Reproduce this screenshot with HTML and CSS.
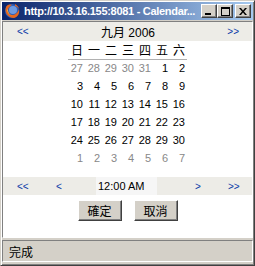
FILE: index.html
```html
<!DOCTYPE html>
<html lang="zh-Hant">
<head>
  <meta charset="UTF-8" />
  <title>Calendar</title>
  <link rel="stylesheet" href="styles.css">
</head>
<body>
  <div class="window">
    <div class="titlebar">
      <svg class="app-icon" width="16" height="16" viewBox="0 0 16 16">
        <circle cx="8" cy="8" r="7" fill="#2f5fb8"/>
        <circle cx="9" cy="7" r="4" fill="#6f9be0"/>
        <path d="M2 4 C0 9 4 15 10 15 C14 14 16 10 15 6 C14 10 11 12 8 12 C5 12 3 9 4 6 C5 4 6 3 8 2 C5 1 3 2 2 4 Z" fill="#e8661c"/>
        <path d="M3 6 C3 10 6 13 10 13 C7 13 4 10 4 7 Z" fill="#f7b13a"/>
        <path d="M11 1 C13 2 15 4 15 6 C14 4 12 3 11 3 Z" fill="#e8661c"/>
      </svg>
      <span class="title-text">http://10.3.16.155:8081 - Calendar...</span>
      <div class="title-buttons">
        <span class="tbtn">
          <svg width="8" height="7" viewBox="0 0 8 7"><rect x="0" y="5" width="6" height="2" fill="#000"/></svg>
        </span>
        <span class="tbtn">
          <svg width="9" height="9" viewBox="0 0 9 9"><rect x="0.5" y="0.5" width="8" height="8" fill="none" stroke="#000"/><rect x="0" y="1" width="9" height="1" fill="#000"/></svg>
        </span>
        <span class="tbtn close">
          <svg width="8" height="7" viewBox="0 0 8 7"><path d="M0 0h2l2 2.5 2-2.5h2l-3 3.5 3 3.5h-2l-2-2.5-2 2.5h-2l3-3.5z" fill="#000"/></svg>
        </span>
      </div>
    </div>

    <div class="content">
      <div class="month-nav">
        <a class="nav">&lt;&lt;</a>
        <span class="month">九月 2006</span>
        <a class="nav">&gt;&gt;</a>
      </div>

      <table class="cal">
        <thead>
          <tr><th>日</th><th>一</th><th>二</th><th>三</th><th>四</th><th>五</th><th>六</th></tr>
        </thead>
        <tbody>
          <tr><td class="other">27</td><td class="other">28</td><td class="other">29</td><td class="other">30</td><td class="other">31</td><td>1</td><td>2</td></tr>
          <tr><td>3</td><td>4</td><td>5</td><td>6</td><td>7</td><td>8</td><td>9</td></tr>
          <tr><td>10</td><td>11</td><td>12</td><td>13</td><td>14</td><td>15</td><td>16</td></tr>
          <tr><td>17</td><td>18</td><td>19</td><td>20</td><td>21</td><td>22</td><td>23</td></tr>
          <tr><td>24</td><td>25</td><td>26</td><td>27</td><td>28</td><td>29</td><td>30</td></tr>
          <tr><td class="other">1</td><td class="other">2</td><td class="other">3</td><td class="other">4</td><td class="other">5</td><td class="other">6</td><td class="other">7</td></tr>
        </tbody>
      </table>

      <div class="time-nav">
        <a class="nav first">&lt;&lt;</a>
        <a class="nav prev">&lt;</a>
        <span class="time">12:00 AM</span>
        <a class="nav next">&gt;</a>
        <a class="nav last">&gt;&gt;</a>
      </div>

      <div class="actions">
        <button>確定</button>
        <button>取消</button>
      </div>
    </div>

    <div class="statusbar">
      <div class="status-text">完成</div>
    </div>
  </div>
</body>
</html>
```

FILE: styles.css
```css
* {
  box-sizing: border-box;
}
body {
  margin: 0;
  font-family: "Liberation Sans", "Noto Sans CJK TC", sans-serif;
  font-size: 11px;
  color: #000;
  background: #d4d0c8;
}
.window {
  width: 255px;
  height: 266px;
  background: #d4d0c8;
  border: 1px solid;
  border-color: #d4d0c8 #404040 #404040 #d4d0c8;
  box-shadow: inset 1px 1px #fff, inset -1px -1px #808080;
  padding: 1px;
}
.titlebar {
  height: 18px;
  display: flex;
  align-items: center;
  background: linear-gradient(to right, #0a246a, #a6caf0);
  padding: 0 2px 0 2px;
}
.app-icon {
  flex: none;
  margin-right: 4px;
}
.title-text {
  flex: 1;
  color: #fff;
  font-weight: bold;
  font-size: 11px;
  letter-spacing: -0.3px;
  white-space: nowrap;
  overflow: hidden;
}
.title-buttons {
  display: flex;
  flex: none;
}
.tbtn {
  width: 16px;
  height: 14px;
  display: flex;
  align-items: center;
  justify-content: center;
  background: #d4d0c8;
  border: 1px solid;
  border-color: #fff #404040 #404040 #fff;
  box-shadow: inset -1px -1px #808080;
}
.tbtn.close {
  margin-left: 2px;
}
.content {
  height: 217px;
  margin-top: 1px;
  background: #fff;
  border: 1px solid;
  border-color: #808080 #fff #fff #808080;
}
.nav {
  color: #0a3aa8;
  font-size: 10px;
  cursor: pointer;
}
.month-nav {
  height: 19px;
  display: flex;
  align-items: center;
  justify-content: space-between;
  background: #edece7;
  padding: 0 13px 0 14px;
}
.month {
  font-size: 12px;
}
.cal {
  border-collapse: collapse;
  border-spacing: 0;
  margin: 0 auto;
}
.cal th {
  width: 17px;
  height: 18px;
  padding: 0 2px 0 0;
  text-align: right;
  font-weight: normal;
  font-size: 12px;
  border-bottom: 1px solid #b0b0b0;
}
.cal td {
  width: 17px;
  height: 18px;
  padding: 0 2px 0 0;
  text-align: right;
}
.cal td.other {
  color: #888;
}
.time-nav {
  height: 18px;
  margin-top: 10px;
  display: grid;
  grid-template-columns: 40px 53px 61px 60px 1fr;
  align-items: center;
  background: #edece7;
}
.time-nav .first {
  padding-left: 14px;
}
.time-nav .prev {
  padding-left: 13px;
}
.time {
  height: 18px;
  line-height: 18px;
  padding-left: 2px;
  background: #f6f6f6;
}
.time-nav .next {
  padding-left: 38px;
}
.time-nav .last {
  padding-left: 11px;
}
.actions {
  margin-top: 5px;
  display: flex;
  justify-content: center;
  gap: 12px;
}
button {
  width: 44px;
  height: 21px;
  padding: 0;
  font-family: "Liberation Sans", "Noto Sans CJK TC", sans-serif;
  font-size: 12px;
  color: #000;
  background: #d4d0c8;
  border: 1px solid;
  border-color: #fff #404040 #404040 #fff;
  box-shadow: inset -1px -1px #808080;
}
.statusbar {
  margin-top: 2px;
  height: 22px;
  border: 1px solid;
  border-color: #808080 #fff #fff #808080;
  display: flex;
  align-items: center;
  padding-left: 6px;
}
.status-text {
  font-size: 12px;
}
```
